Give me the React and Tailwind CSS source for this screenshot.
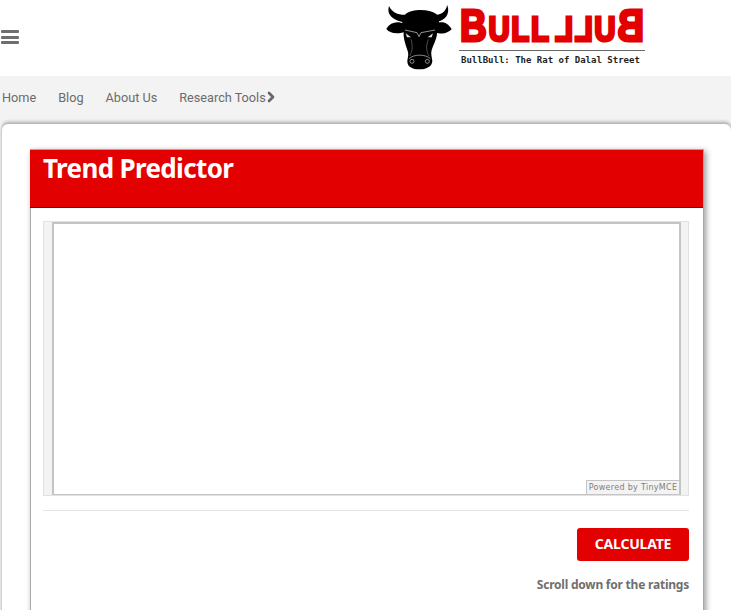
import { ChevronRight } from "lucide-react";

const BullHead = () => (
    <svg width="80" height="76" viewBox="0 0 240 228" className="shrink-0">
        <path d="M30 18C22 44 40 62 82 68L86 44C60 46 40 40 30 18Z" fill="#000" />
        <path d="M205 15C214 44 200 62 164 68L160 44C186 46 198 38 205 15Z" fill="#000" />
        <path d="M78 72C55 62 35 66 22 86C30 98 50 105 78 96Z" fill="#000" />
        <path d="M166 72C190 62 205 66 218 88C205 100 190 105 166 96Z" fill="#000" />
        <path d="M80 42C100 26 150 26 172 42C184 60 182 82 174 94C176 112 165 130 158 150C155 160 158 170 160 182C160 200 140 208 122 208C100 208 84 200 85 182C87 170 90 160 85 150C78 130 72 112 74 94C66 82 68 58 80 42Z" fill="#000" />
        <path d="M78 90L114 98L120 110L126 98L168 90" fill="none" stroke="#ddd" strokeWidth="2" />
        <path d="M80 100L96 112L84 112Z" fill="#ddd" />
        <path d="M162 100L146 112L158 112Z" fill="#ddd" />
        <path d="M96 118C102 140 100 155 92 168M148 118C140 140 142 155 150 168" fill="none" stroke="#999" strokeWidth="1.5" />
        <path d="M90 176C104 162 140 162 154 176" fill="none" stroke="#ccc" strokeWidth="2" />
        <circle cx="99" cy="184" r="6" fill="none" stroke="#ccc" strokeWidth="2" />
        <circle cx="145" cy="184" r="6" fill="none" stroke="#ccc" strokeWidth="2" />
    </svg>
);

const Wordmark = ({ mirrored }) => (
    <span
        className={`block h-[36px] w-[93px] whitespace-nowrap font-['Liberation_Sans',sans-serif] font-bold leading-[36px] text-[#e30000] [-webkit-text-stroke:3px_#e30000] ${
            mirrored ? "origin-center -scale-x-100" : ""
        }`}
    >
        <span className="ml-[1px] inline-block origin-left scale-x-[0.84] tracking-[2px]">
            <span className="text-[44px]">B</span>
            <span className="text-[35px]">ULL</span>
        </span>
    </span>
);

const Logo = () => (
    <div className="flex items-start">
        <BullHead />
        <div className="flex w-[186px] flex-col pt-[8px]">
            <div className="flex">
                <Wordmark />
                <Wordmark mirrored />
            </div>
            <div className="mt-[6px] h-px bg-[#666]"></div>
            <div className="mt-[3px] whitespace-nowrap pl-[2px] font-['DejaVu_Sans_Mono',monospace] text-[9px] font-bold leading-[12px] text-[#222]">
                BullBull: The Rat of Dalal Street
            </div>
        </div>
    </div>
);

export default function App() {
    return (
        <div className="h-[610px] overflow-hidden bg-[#f3f3f3] font-['Roboto',sans-serif]">
            {/* Header */}
            <header className="flex h-[76px] items-start bg-white">
                <div className="ml-[1px] mt-[30px] flex w-[18px] flex-col gap-[2.5px]">
                    <span className="h-[3px] rounded-[1px] bg-[#6f6f6f]"></span>
                    <span className="h-[3px] rounded-[1px] bg-[#6f6f6f]"></span>
                    <span className="h-[3px] rounded-[1px] bg-[#6f6f6f]"></span>
                </div>
                <div className="ml-[360px]">
                    <Logo />
                </div>
            </header>

            {/* Nav */}
            <nav className="flex h-[45px] items-center gap-[22px] bg-[#f3f3f3] pb-[2px] pl-[2px] text-[12.7px] text-[#6b6b6b]">
                <span>Home</span>
                <span>Blog</span>
                <span>About Us</span>
                <span className="flex items-center">
                    Research Tools
                    <ChevronRight size={16} strokeWidth={4} className="-ml-[3px] text-[#666]" />
                </span>
            </nav>

            {/* Page card */}
            <main className="ml-[2px] mt-[3px] h-[500px] rounded-t-[6px] bg-white pl-[28px] pr-[27px] pt-[25px] shadow-[0_-3px_3px_rgba(0,0,0,0.18),0_0_3px_rgba(0,0,0,0.25)]">
                <section className="h-[480px] border-x border-t border-[#a8a8a8] bg-white shadow-[2px_2px_6px_rgba(0,0,0,0.4)]">
                    <div className="-ml-px h-[58px] border-b border-[#700000] bg-[#e30000] pl-[13px]">
                        <h1 className="font-['Noto_Sans',sans-serif] text-[26px] font-bold leading-[36px] tracking-[-0.65px] text-white">
                            Trend Predictor
                        </h1>
                    </div>

                    <div className="pl-[12px] pr-[14px] pt-[13px]">
                        <div className="h-[275px] border border-[#e2e2e2] bg-[#f3f3f3] pl-[8px] pr-[7px]">
                            <div className="flex h-full flex-col items-end justify-end border-x-2 border-b border-t-2 border-[#c4c4c4] bg-white">
                                <div className="flex h-[14px] w-[93px] items-center justify-center whitespace-nowrap border-l border-t border-[#c4c4c4] bg-[#f3f3f3] pt-[1px] font-['DejaVu_Sans',sans-serif] text-[8px] tracking-[0.3px] text-[#808080]">
                                    Powered by TinyMCE
                                </div>
                            </div>
                        </div>

                        <div className="mt-[14px] border-t border-[#e4e4e4]"></div>

                        <div className="mt-[17px] flex justify-end">
                            <button className="h-[33px] w-[112px] rounded-[3px] bg-[#e30000] pb-[2px] font-['Noto_Sans',sans-serif] text-[14px] font-bold tracking-[-0.2px] text-white">
                                CALCULATE
                            </button>
                        </div>

                        <p className="mt-[15px] text-right font-['Noto_Sans',sans-serif] text-[12px] font-bold leading-[18px] tracking-[-0.22px] text-[#6f6f6f]">
                            Scroll down for the ratings
                        </p>
                    </div>
                </section>
            </main>
        </div>
    );
}
